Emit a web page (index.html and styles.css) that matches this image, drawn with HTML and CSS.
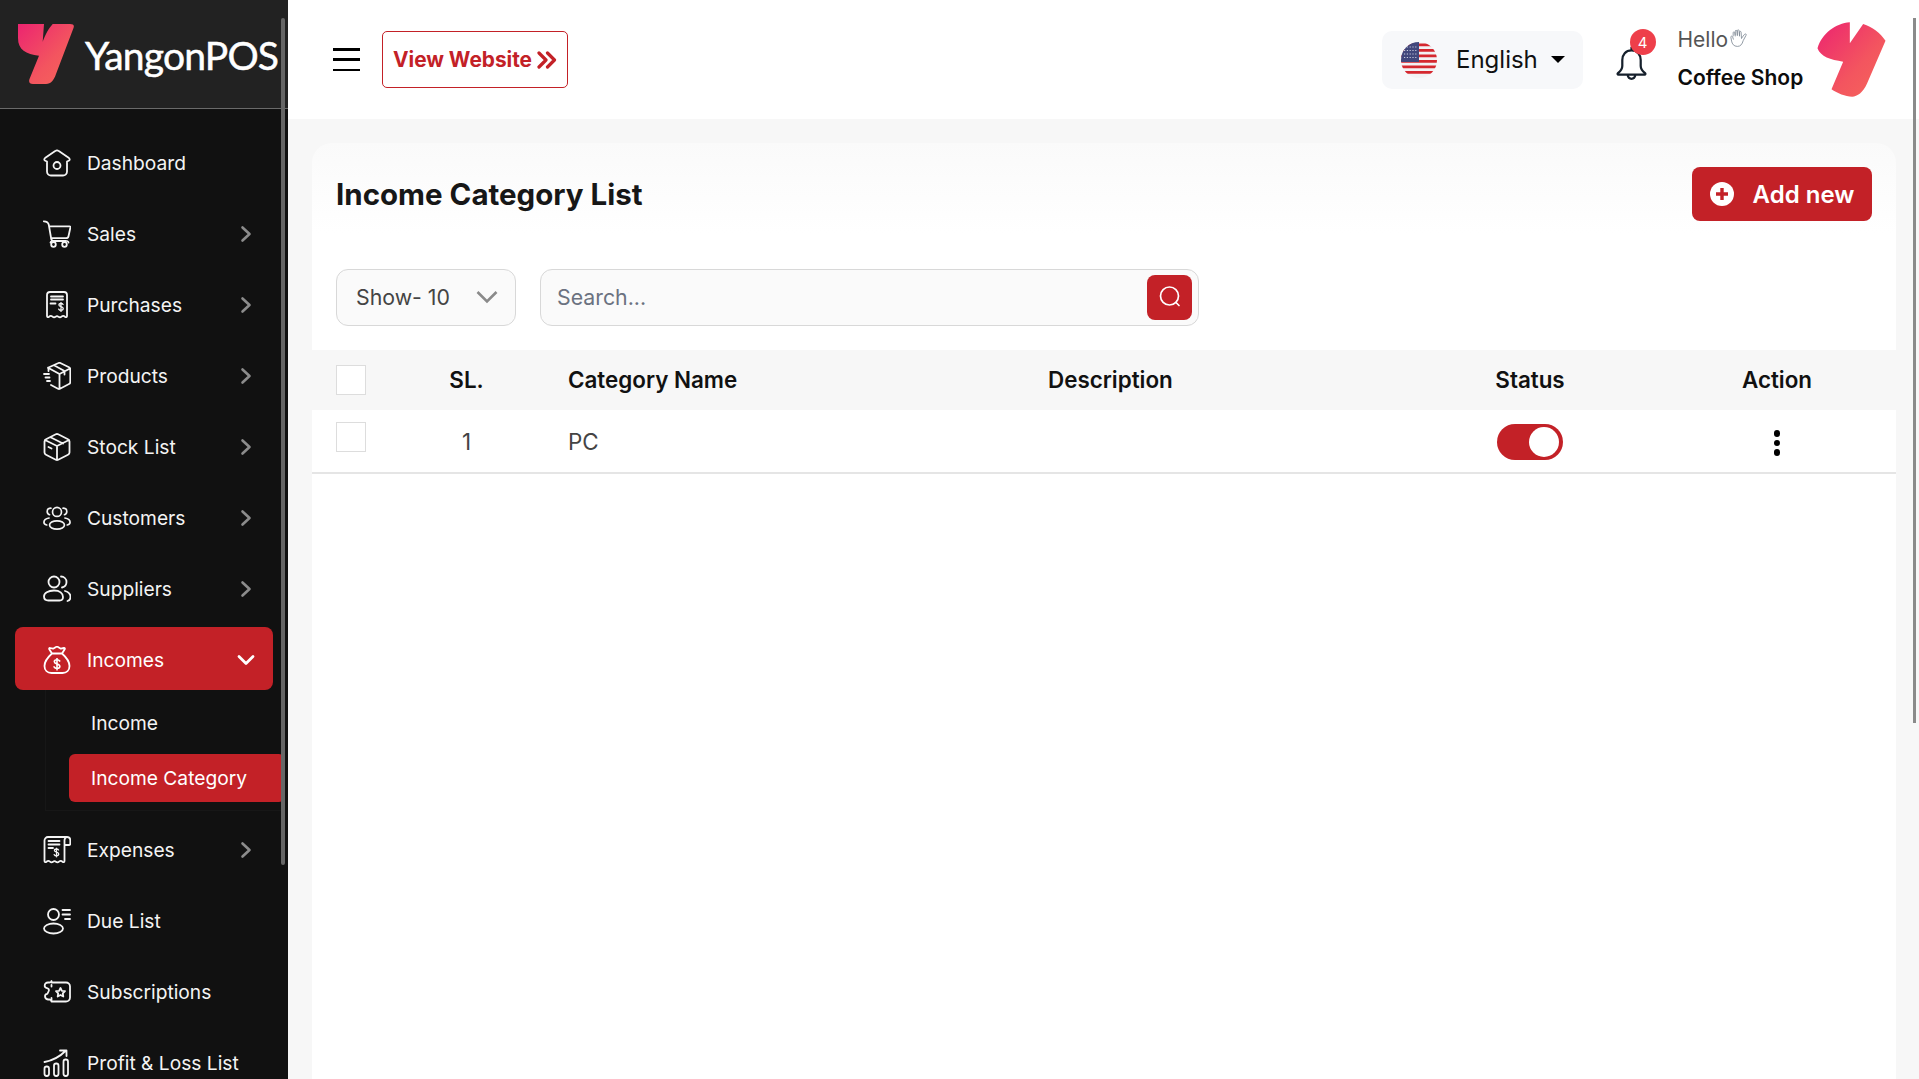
FILE: index.html
```html
<!DOCTYPE html>
<html lang="en">
<head>
<meta charset="utf-8">
<title>Income Category List</title>
<link rel="stylesheet" href="styles.css">
</head>
<body>
<svg class="defs" aria-hidden="true">
  <defs>
    <linearGradient id="brand" x1="0" y1="0" x2="1" y2="1">
      <stop offset="0" stop-color="#ec2470"/>
      <stop offset="0.6" stop-color="#f3555f"/>
      <stop offset="1" stop-color="#f6665a"/>
    </linearGradient>
    <clipPath id="flagclip"><circle cx="18" cy="18" r="18"/></clipPath>
    <symbol id="dollar" viewBox="0 0 10 14"><path d="M8 3.4C7.4 2.4 6.3 2 5 2 3.3 2 2 2.8 2 4.2 2 7.2 8.2 6 8.2 9.3 8.2 10.900 6.800 11.700 5 11.700c-1.500 0-2.700-.6-3.300-1.700M5 .3v13.400"/></symbol>
    <symbol id="i-home" viewBox="0 0 28 28"><path d="M12.200 2.100 2 9.100c-1 .8-1 2 .3 2.600l1.700.8V22.500a4 4 0 0 0 4 4h12a4 4 0 0 0 4-4V12.500l1.700-.8c1.300-.6 1.300-1.800.3-2.600L15.800 2.100a3 3 0 0 0-3.600 0z"/><circle cx="14" cy="16.500" r="3.500"/></symbol>
    <symbol id="i-cart" viewBox="0 0 28 28"><path d="M.8 1.300c3 0 4.500 1 5 3.500L8.300 19.300c.2 1 1 1.700 2 1.700h12.500M6 6.300h20.500c.7 0 1 .5.9 1.100l-1.900 8.800c-.3 1.300-1.200 2-2.500 2H8"/><path d="M9 21c-1 .3-1.500 1-1.500 1.500 M24 21c1 .3 1.500 1 1.500 1.500"/><circle cx="10.500" cy="24.500" r="2.300"/><circle cx="21.500" cy="24.500" r="2.300"/></symbol>
    <symbol id="i-receipt" viewBox="0 0 28 28"><path d="M4 4a3 3 0 0 1 3-3h14a3 3 0 0 1 3 3v21c0 1.300-1 1.500-2 .7-1.300-1.100-2.300-1.100-3.500 0-1 .9-2 .9-3 .1-1.100-1-1.900-1-3 0-1 .8-2 .8-3-.1-1.200-1.100-2.200-1.100-3.500 0-1 .8-2 .6-2-.7z"/><path d="M8 5.500h12M8 8.500h12M7.500 12.500h5"/><use href="#dollar" x="14.500" y="11" width="7" height="10"/></symbol>
    <symbol id="i-parcel" viewBox="0 0 28 28"><path d="M5 5.800 15.500 1c.6-.3 1.200-.3 1.800 0L26 5.200c.8.400 1.300 1.100 1.300 2V20c0 .9-.5 1.600-1.300 2l-9 4.700c-.7.4-1.300.4-2 0L8 23M5 5.800l11.500 6.200L27 6.500M16.500 12v14.800M11 3.300 21.500 9v3.500M5.500 6v3M1 12h5M2.500 15.500h4M4 19h3"/></symbol>
    <symbol id="i-box" viewBox="0 0 28 28"><path d="M12.800 1.300 3 6.200c-1 .5-1.500 1.300-1.500 2.300v11c0 1 .5 1.800 1.500 2.300l9.800 4.900c.8.400 1.600.4 2.400 0l9.800-4.900c1-.5 1.500-1.300 1.500-2.300v-11c0-1-.5-1.800-1.500-2.300l-9.800-4.900c-.8-.4-1.600-.4-2.400 0zM2 7l12 6 12-6M14 13v14M7.500 4.200 20 10.500M5.500 14l3 1.500"/></symbol>
    <symbol id="i-people" viewBox="0 0 30 28"><circle cx="15" cy="7.500" r="4.800"/><ellipse cx="15" cy="21.500" rx="8" ry="4.500"/><path d="M8.500 3.500C6 3.500 4.500 5 4.500 7c0 1.500 1 3 2.500 3.500M21.500 3.500C24 3.500 25.500 5 25.500 7c0 1.500-1 3-2.500 3.500M6.500 14C3 14.500 1 16.500 1 18.500c0 1.500 1 2.500 3 3M23.500 14c3.500.5 5.500 2.500 5.500 4.500 0 1.500-1 2.500-3 3"/></symbol>
    <symbol id="i-users" viewBox="0 0 28 28"><circle cx="11" cy="7" r="5.500"/><path d="M11 15.500c-6 0-10 2.500-10 6 0 2.500 2 4 4.500 4h11c2 0 3.500-1.500 3.500-3.500 0-3.500-3-6.500-9-6.500zM18 1.500c3 0 5.500 2.300 5.500 5.500 0 2.800-2 5-4.500 5.500M22 16c3.500 1 5.500 3 5.500 6 0 2-1 3.500-3 4"/></symbol>
    <symbol id="i-bag" viewBox="0 0 28 28"><path d="M9 7.500 6.300 3.200c-.4-.7 0-1.400.8-1.200l3 .7L13 .9c.6-.4 1.400-.4 2 0l2.900 1.800 3-.7c.8-.2 1.200.5.8 1.200L19 7.500M9 7.500h10M9 7.500C4.500 11.500 1.500 15.500 1.500 20c0 4.500 3 7 7 7h11c4 0 7-2.500 7-7 0-4.500-3-8.500-7.500-12.500"/><use href="#dollar" x="9.500" y="12" width="9" height="12.500"/></symbol>
    <symbol id="i-bill" viewBox="0 0 28 28"><path d="M24 1H5a3.500 3.500 0 0 0-3.500 3.500V25c0 1.300 1 1.500 2 .7 1.300-1.100 2.300-1.100 3.500 0 1 .9 2 .9 3 .1 1.100-1 1.900-1 3 0 1 .8 2 .8 3-.1 1.200-1.100 2.200-1.100 3.500 0 1 .8 2 .6 2-.7V4.500A3.500 3.500 0 0 1 24 1c1.800 0 3.300 1.500 3.300 3.500v3c0 .9-.6 1.500-1.500 1.500H21.500"/><path d="M5.500 5h11M5.500 8.500h11M5.500 12h4.500"/><use href="#dollar" x="10" y="11.500" width="7" height="10"/></symbol>
    <symbol id="i-due" viewBox="0 0 28 28"><circle cx="10.500" cy="7.500" r="5.500"/><ellipse cx="10.500" cy="21.500" rx="9.500" ry="5"/><path d="M19.500 3h7.500M19.500 7.500h7.500M22 12h5"/></symbol>
    <symbol id="i-ticket" viewBox="0 0 28 28"><path d="M8.500 4.500h14.500a4 4 0 0 1 4 4v11a4 4 0 0 1-4 4H8.500c-.3-1.500-1-2-2-2H5a3.500 3.500 0 0 1-3-3.500c0-1.400 1-2 2.300-2.200C5.500 13.600 6 12.800 6 12c0-1-.8-1.500-2-1.800C2.500 9.800 1.700 9 1.700 7.800 1.700 6 3 4.500 5 4.500h1.500c1 0 1.700-.5 2-1.500zM8.500 7v1.500M8.500 20v2"/><path d="m17.500 10 1.400 2.800 3.100.4-2.200 2.200.5 3.100-2.800-1.500-2.800 1.500.5-3.100-2.200-2.200 3.100-.4z"/></symbol>
    <symbol id="i-chart" viewBox="0 0 28 28"><rect x="1.500" y="17.500" width="4.500" height="9.500" rx="2.200"/><rect x="11" y="14.500" width="4.500" height="12.500" rx="2.200"/><rect x="20.500" y="10.500" width="4.500" height="16.500" rx="2.200"/><path d="M1.500 13C10 11.500 17 7.500 23 1.500M17 1.500h6.500V7"/></symbol>
    <symbol id="i-chev" viewBox="0 0 12 18"><path d="m2.500 2.500 7 6.500-7 6.500"/></symbol>
  </defs>
</svg>

<div class="app">
  <aside class="sidebar">
    <div class="brand">
      <svg class="brand-mark" viewBox="0 0 56 60"><path fill="url(#brand)" d="M0 0H26L24.700 17.700C27 11 31 4 34.700 0H52Q57 0 55.500 4L38 50C36 56 33 60 28 60H15C11.500 60 10.500 58 11.500 55L21 31.700C8 30 0 26 0 14Z"/></svg>
      <span class="brand-name">YangonPOS</span>
    </div>
    <nav class="nav">
      <a class="nav-item"><svg class="ic"><use href="#i-home"/></svg><span class="nav-label">Dashboard</span></a>
      <a class="nav-item"><svg class="ic"><use href="#i-cart"/></svg><span class="nav-label">Sales</span><svg class="chev"><use href="#i-chev"/></svg></a>
      <a class="nav-item"><svg class="ic"><use href="#i-receipt"/></svg><span class="nav-label">Purchases</span><svg class="chev"><use href="#i-chev"/></svg></a>
      <a class="nav-item"><svg class="ic"><use href="#i-parcel"/></svg><span class="nav-label">Products</span><svg class="chev"><use href="#i-chev"/></svg></a>
      <a class="nav-item"><svg class="ic"><use href="#i-box"/></svg><span class="nav-label">Stock List</span><svg class="chev"><use href="#i-chev"/></svg></a>
      <a class="nav-item"><svg class="ic"><use href="#i-people"/></svg><span class="nav-label">Customers</span><svg class="chev"><use href="#i-chev"/></svg></a>
      <a class="nav-item"><svg class="ic"><use href="#i-users"/></svg><span class="nav-label">Suppliers</span><svg class="chev"><use href="#i-chev"/></svg></a>
      <a class="nav-item is-active"><svg class="ic"><use href="#i-bag"/></svg><span class="nav-label">Incomes</span><svg class="chev-down" viewBox="0 0 18 12"><path d="m2 2.500 7 7 7-7"/></svg></a>
      <div class="subnav">
        <a class="sub-item">Income</a>
        <a class="sub-item is-current">Income Category</a>
      </div>
      <a class="nav-item"><svg class="ic"><use href="#i-bill"/></svg><span class="nav-label">Expenses</span><svg class="chev"><use href="#i-chev"/></svg></a>
      <a class="nav-item"><svg class="ic"><use href="#i-due"/></svg><span class="nav-label">Due List</span></a>
      <a class="nav-item"><svg class="ic"><use href="#i-ticket"/></svg><span class="nav-label">Subscriptions</span></a>
      <a class="nav-item"><svg class="ic"><use href="#i-chart"/></svg><span class="nav-label">Profit &amp; Loss List</span></a>
    </nav>
    <div class="side-thumb"></div>
  </aside>

  <div class="main">
    <header class="topbar">
      <button class="burger" aria-label="Menu"><span></span><span></span><span></span></button>
      <a class="view-site">View Website
        <svg class="view-icon" viewBox="0 0 20 18"><path d="m2 2 7 7-7 7M10.500 2l7 7-7 7"/></svg>
      </a>
      <div class="top-right">
        <div class="lang">
          <svg class="flag" viewBox="0 0 36 36">
            <g clip-path="url(#flagclip)">
              <rect width="36" height="36" fill="#f2f2f4"/>
              <path class="flag-red" d="M0 1.500h36v2.800H0zM0 7h36v2.800H0zM0 12.500h36v2.800H0zM0 18h36v2.800H0zM0 23.500h36v2.800H0zM0 29h36v2.800H0z"/>
              <rect width="18" height="20" fill="#41477c"/>
              <path class="flag-stars" d="M3 5h13M3 8.500h13M3 12h13M3 15.500h13"/>
            </g>
          </svg>
          <span class="lang-name">English</span>
          <span class="caret"></span>
        </div>
        <div class="bell">
          <svg class="bell-icon" viewBox="0 0 32 36"><path d="M16 2v3M16 5c-6 0-9.500 4.500-9.500 10v6c0 3-2 5.500-4.500 7.500-.7.600-.4 1.500.5 1.500h27c.9 0 1.200-.9.500-1.500-2.500-2-4.500-4.500-4.500-7.500v-6c0-5.500-3.500-10-9.500-10zM12 30.500c.5 2.500 2 3.800 4 3.800s3.500-1.300 4-3.800"/></svg>
          <span class="badge">4</span>
        </div>
        <div class="greeting">
          <div class="hello">Hello<svg class="hand" viewBox="0 0 18 18"><path d="M3 7V3.500c0-1 1.300-1 1.500 0L5 7M5 6V2c0-1 1.500-1 1.600 0l.4 4.500M7 6V1.500c0-1 1.500-1 1.600 0L9 6.500M9 7V3c0-1 1.500-1 1.500 0l.4 6c1-1.500 2-3.200 3-4 1-.7 2 0 1.300 1l-2.700 5c-1 3.500-2.500 5.500-5.500 5.500-3.500 0-5-2.500-5.500-5L.8 7.800C.5 6.800 2 6.300 2.500 7.500L3.300 10"/></svg></div>
          <div class="shop">Coffee Shop</div>
        </div>
        <svg class="avatar" viewBox="440 36 206 225"><path fill="url(#brand)" d="M441 115C455 70 495 40 538 37L538 100 578 42C605 50 630 70 645 92L590 220C578 248 560 260 545 260 525 260 500 250 483 238L518 155C480 150 450 140 441 115Z"/></svg>
      </div>
    </header>

    <main class="content">
      <section class="card">
        <div class="card-head">
          <h1 class="title">Income Category List</h1>
          <button class="add-btn">
            <svg class="add-icon" viewBox="0 0 24 24"><circle cx="12" cy="12" r="12"/><path d="M12 6v12M6 12h12"/></svg>
            Add new
          </button>
        </div>
        <div class="filters">
          <div class="show-select">Show- 10
            <svg class="select-chev" viewBox="0 0 22 14"><path d="m1.500 2 9.500 9.500L20.500 2"/></svg>
          </div>
          <div class="search">
            <span class="search-text">Search...</span>
            <button class="search-btn" aria-label="Search"><svg class="search-icon" viewBox="0 0 24 24"><circle cx="11.500" cy="11" r="9"/><path d="m18 17.500 3 3"/></svg></button>
          </div>
        </div>
        <table class="grid">
          <colgroup>
            <col class="c-check"><col class="c-sl"><col class="c-name"><col class="c-desc"><col class="c-status"><col class="c-action">
          </colgroup>
          <thead>
            <tr>
              <th class="cell-check"><span class="check"></span></th>
              <th class="center">SL.</th>
              <th class="left">Category Name</th>
              <th class="left">Description</th>
              <th class="center">Status</th>
              <th class="center">Action</th>
            </tr>
          </thead>
          <tbody>
            <tr>
              <td class="cell-check"><span class="check"></span></td>
              <td class="center">1</td>
              <td class="left">PC</td>
              <td class="left"></td>
              <td class="center"><span class="toggle"><span class="knob"></span></span></td>
              <td class="center"><span class="dots"><i></i><i></i><i></i></span></td>
            </tr>
          </tbody>
        </table>
      </section>
    </main>
    <div class="page-thumb"></div>
  </div>
</div>
</body>
</html>
```

FILE: styles.css
```css
* { box-sizing: border-box; }
html, body { height: 100%; margin: 0; overflow: hidden; }
body { font-family: Inter, "Liberation Sans", sans-serif; color: #111; background: #f7f7f7; }
.defs { position: absolute; width: 0; height: 0; }
button { font-family: inherit; border: 0; padding: 0; cursor: pointer; }

.app { display: grid; grid-template-columns: 288px 1fr; height: 100vh; }

/* Sidebar */
.sidebar { position: relative; background: #111; overflow: hidden; height: 100vh; }
.brand { height: 109px; background: #222; border-bottom: 1px solid #6a6a6a; display: flex; align-items: flex-start; padding: 24px 0 0 18px; }
.brand-mark { width: 56px; height: 60px; flex: none; }
.brand-name { font-family: Lato, sans-serif; font-size: 39px; line-height: 46px; color: #fff; margin: 8px 0 0 11px; letter-spacing: -0.8px; -webkit-text-stroke: 0.5px #fff; }
.nav { padding: 21px 0 0 15px; display: flex; flex-direction: column; gap: 8px; }
.nav-item { height: 63px; width: 258px; flex: none; display: flex; align-items: center; padding: 2px 0 0 28px; border-radius: 8px; color: #f4f4f4; font-size: 19.2px; }
.nav-item.is-active { background: #c32127; color: #fff; }
.ic { width: 28px; height: 28px; flex: none; fill: none; stroke: currentColor; stroke-width: 1.8; stroke-linecap: round; stroke-linejoin: round; }
.nav-label { margin-left: 16px; flex: 1; padding-top: 1px; }
.chev { width: 12px; height: 18px; flex: none; margin-right: 21px; fill: none; stroke: #8c8c8c; stroke-width: 2.6; stroke-linecap: round; stroke-linejoin: round; }
.chev-down { width: 18px; height: 12px; flex: none; margin-right: 18px; fill: none; stroke: #fff; stroke-width: 2.8; stroke-linecap: round; stroke-linejoin: round; }
.subnav { margin: -8px 0 -2px 30px; width: 239.500px; padding: 9px 0 8px 23px; display: flex; flex-direction: column; gap: 7px; border-left: 1px solid #171717; border-bottom: 1px solid #171717; }
.sub-item { height: 48px; display: flex; align-items: center; padding-left: 22px; border-radius: 6px; color: #f4f4f4; font-size: 19.2px; }
.sub-item.is-current { background: #c32127; color: #fff; }
.side-thumb { position: absolute; left: 281px; top: 18px; width: 4px; height: 847px; background: #666; border-radius: 2px; }

/* Main */
.main { position: relative; min-width: 0; height: 100vh; overflow: hidden; display: flex; flex-direction: column; }
.topbar { height: 119px; flex: none; background: #fff; display: flex; align-items: center; padding: 0 33.500px 0 45px; }
.burger { width: 27px; height: 23px; background: none; display: flex; flex-direction: column; justify-content: space-between; }
.burger span { display: block; height: 2.500px; background: #000; }
.view-site { margin-left: 22px; width: 186px; height: 57px; border: 1.5px solid #c32127; border-radius: 5px; display: flex; align-items: center; justify-content: center; gap: 5px; color: #c32127; font-size: 20.8px; font-weight: 700; white-space: nowrap; }
.view-icon { width: 20px; height: 18px; fill: none; stroke: #c32127; stroke-width: 3.2; stroke-linejoin: round; stroke-linecap: round; }
.top-right { margin-left: auto; display: flex; align-items: center; }
.lang { width: 200.500px; height: 58px; background: #f7f8fa; border-radius: 10px; display: flex; align-items: center; padding-left: 19px; }
.flag { width: 36px; height: 36px; flex: none; }
.flag-red { fill: #d5282f; }
.flag-stars { fill: none; stroke: #c9cbdc; stroke-width: 1.2; stroke-dasharray: 1.2 1.6; }
.lang-name { margin-left: 19px; font-size: 24px; color: #111; }
.caret { margin-left: 13.500px; width: 0; height: 0; border-left: 7px solid transparent; border-right: 7px solid transparent; border-top: 7px solid #000; }
.bell { position: relative; width: 31px; height: 36px; margin-left: 33px; margin-top: 7px; }
.bell-icon { width: 31px; height: 36px; display: block; fill: none; stroke: #16202c; stroke-width: 2.300; stroke-linejoin: round; stroke-linecap: round; }
.badge { position: absolute; left: 14px; top: -16px; width: 26px; height: 26px; border-radius: 50%; background: #ee3f4a; color: #fff; font-size: 15px; display: flex; align-items: center; justify-content: center; }
.greeting { margin-left: 31px; width: 125px; display: flex; flex-direction: column; gap: 11px; white-space: nowrap; margin-top: -2px; }
.hello { font-size: 21px; line-height: 26px; color: #555; display: flex; align-items: center; }
.hand { width: 19px; height: 19px; margin: -4px 0 0 2px; fill: #fff; stroke: #7f8a96; stroke-width: 0.8; stroke-linejoin: round; }
.shop { font-size: 21px; line-height: 26px; font-weight: 600; color: #0c0c0c; margin-top: 1px; margin-bottom: -1px; }
.avatar { width: 69px; height: 75px; flex: none; margin-left: 14px; }

.content { flex: 1; min-height: 0; padding: 24px 23px 0 24px; }
.card { height: 100%; background: linear-gradient(#fafafa, #fff 90px); border-radius: 20px 20px 0 0; padding-top: 24px; }
.card-head { display: flex; align-items: center; justify-content: space-between; padding: 0 24px 0 24px; }
.title { margin: 0; font-size: 29.500px; line-height: 54px; font-weight: 700; color: #171717; }
.add-btn { width: 180px; height: 54px; background: #c32127; color: #fff; border-radius: 8px; display: flex; align-items: center; justify-content: center; gap: 19px; font-size: 24px; font-weight: 600; }
.add-icon { width: 24px; height: 24px; flex: none; }
.add-icon circle { fill: #fff; }
.add-icon path { stroke: #c32127; stroke-width: 3.4; fill: none; }
.filters { display: flex; gap: 24px; padding-left: 24px; margin-top: 48px; }
.show-select { width: 180px; height: 57px; background: #fafafa; border: 1px solid #d8d8d8; border-radius: 12px; display: flex; align-items: center; padding: 0 17px 1px 19px; justify-content: space-between; color: #444; font-size: 21.300px; white-space: nowrap; }
.select-chev { width: 22px; height: 14px; fill: none; stroke: #8a8a8a; stroke-width: 2.600; }
.search { width: 659px; height: 57px; background: #fafafa; border: 1px solid #d8d8d8; border-radius: 12px; display: flex; align-items: center; justify-content: space-between; padding: 0 6px 1px 16px; }
.search-text { font-size: 21.300px; color: #6b7280; }
.search-btn { width: 45px; height: 45px; background: #c32127; border-radius: 8px; display: flex; align-items: center; justify-content: center; }
.search-icon { width: 24px; height: 24px; fill: none; stroke: #fff; stroke-width: 1.7; stroke-linecap: round; }

.grid { width: 1584px; margin-top: 24px; border-collapse: collapse; table-layout: fixed; font-size: 22.400px; }
.c-check { width: 103px; } .c-sl { width: 103px; } .c-name { width: 480px; } .c-desc { width: 404px; } .c-status { width: 256px; } .c-action { width: 238px; }
.grid th { height: 60px; background: #f7f7f7; font-weight: 600; color: #111; padding: 0 0 1px; }
.grid td { height: 63px; border-bottom: 2px solid #e5e5e5; color: #444; padding: 1px 0 0; }
.center { text-align: center; }
.left { text-align: left; }
.grid .left { padding-left: 50px; }
.grid .cell-check { padding-left: 24px; }
.check { display: block; width: 30px; height: 30px; background: #fff; border: 1px solid #ddd; }
.grid td.cell-check .check { margin-top: -9px; }
.toggle { display: inline-flex; width: 66px; height: 36px; border-radius: 18px; background: #c32127; align-items: center; justify-content: flex-end; padding-right: 4px; vertical-align: middle; }
.knob { width: 30px; height: 30px; border-radius: 50%; background: #fff; }
.dots { display: inline-flex; flex-direction: column; gap: 3px; vertical-align: middle; }
.dots i { display: block; width: 6.5px; height: 6.500px; border-radius: 50%; background: #000; }

.page-thumb { position: absolute; right: 3px; top: 18px; width: 3px; height: 705px; background: #8a8a8a; }
```
